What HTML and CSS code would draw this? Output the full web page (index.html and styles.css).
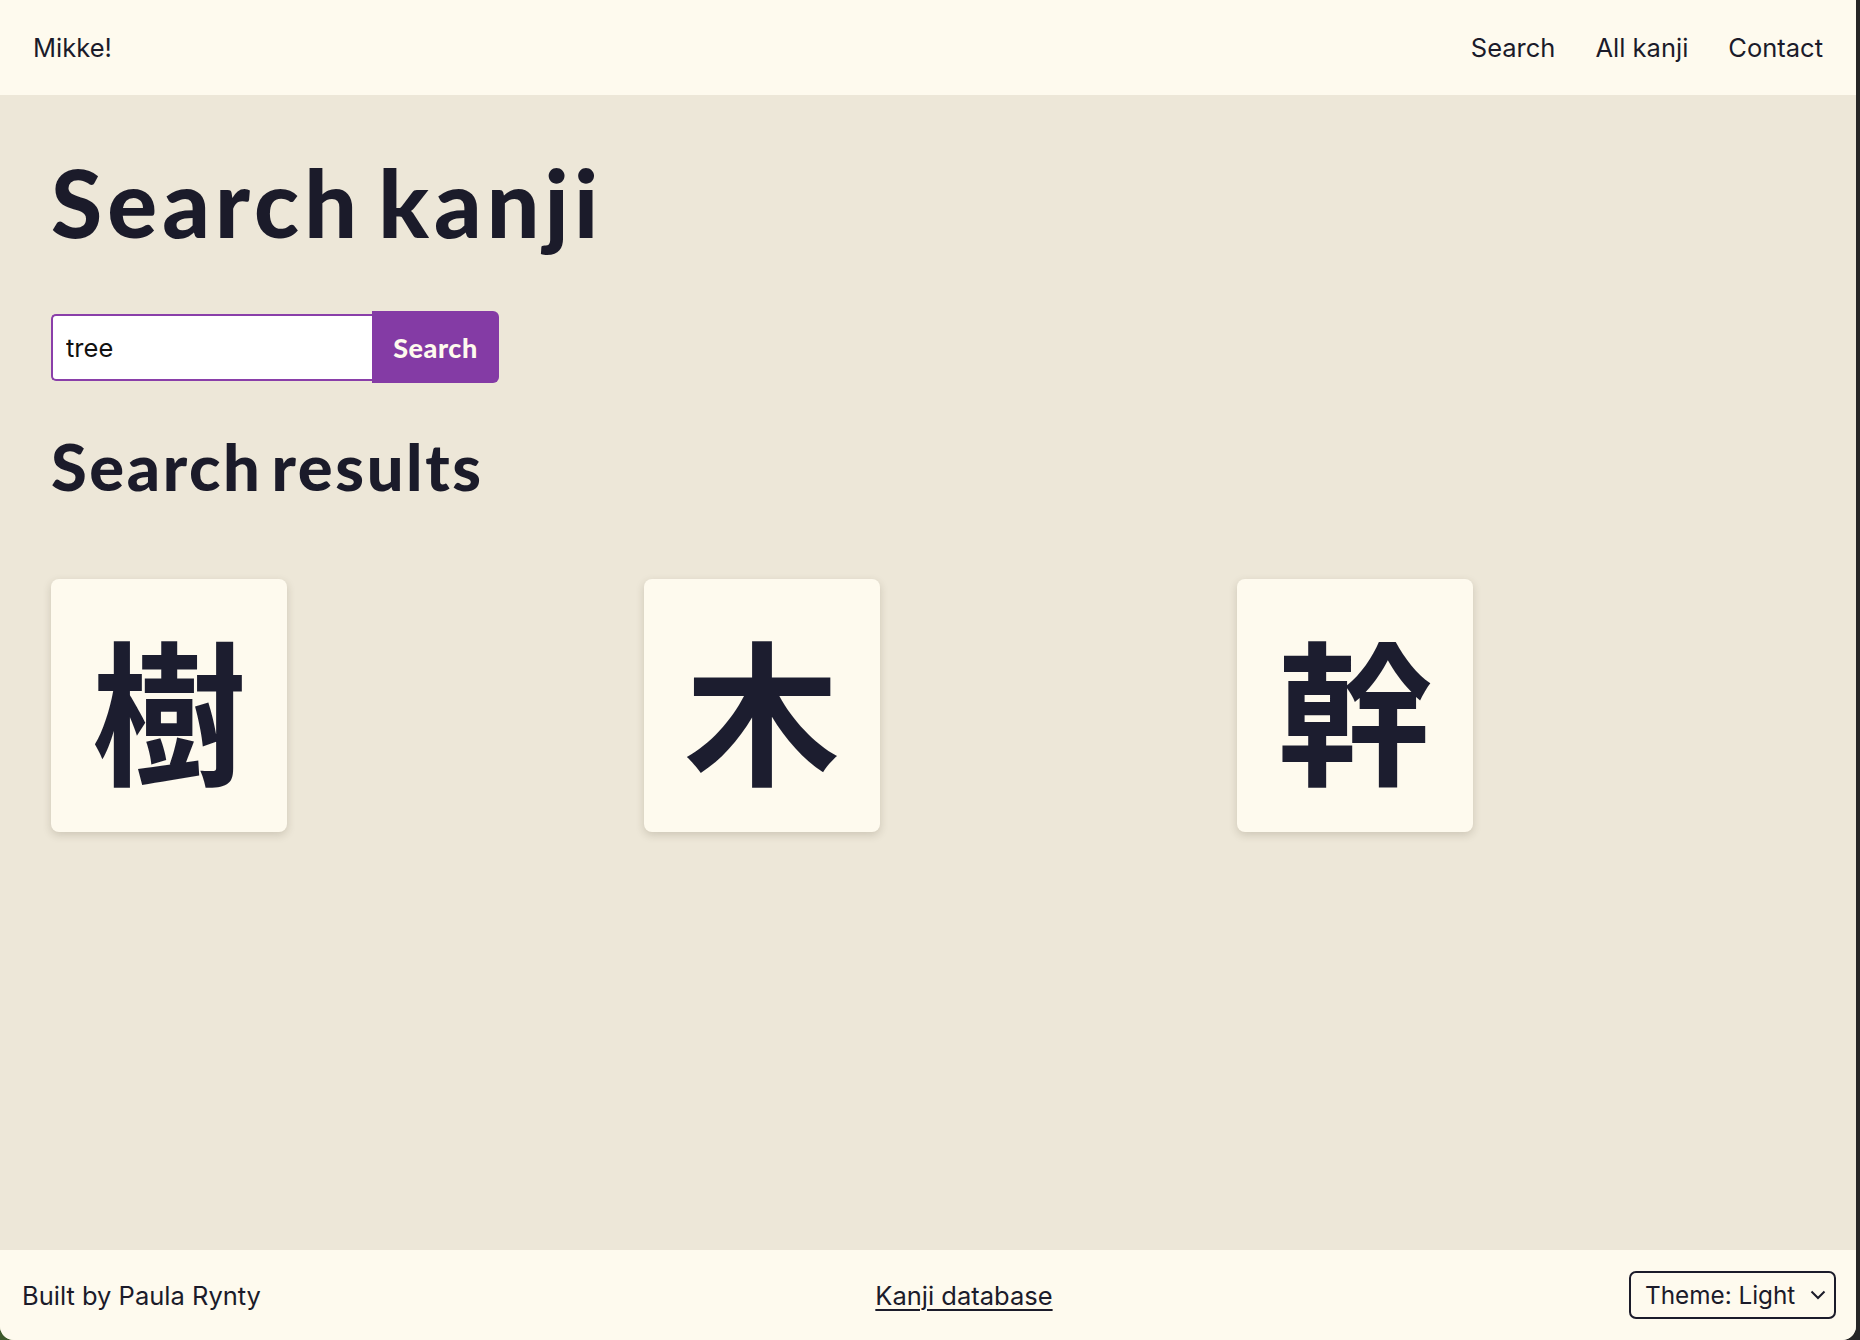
FILE: index.html
```html
<!DOCTYPE html>
<html lang="en">
<head>
<meta charset="utf-8">
<title>Mikke! – Search kanji</title>
<link rel="stylesheet" href="styles.css">
</head>
<body>
<div class="window">
  <header class="site-header">
    <a class="brand" href="#">Mikke!</a>
    <nav class="nav">
      <a href="#">Search</a>
      <a href="#">All kanji</a>
      <a href="#">Contact</a>
    </nav>
  </header>
  <main class="main">
    <h1 class="title">Search kanji</h1>
    <form class="search-form">
      <input class="search-input" type="text" value="tree">
      <button class="search-btn" type="button">Search</button>
    </form>
    <h2 class="subtitle">Search results</h2>
    <div class="results">
      <a class="kanji-card" href="#" lang="ja">樹</a>
      <a class="kanji-card" href="#" lang="ja">木</a>
      <a class="kanji-card" href="#" lang="ja">幹</a>
    </div>
  </main>
  <footer class="site-footer">
    <span class="credit">Built by Paula Rynty</span>
    <a class="db-link" href="#">Kanji database</a>
    <div class="theme-select">
      <select class="theme">
        <option>Theme: Light</option>
        <option>Theme: Dark</option>
      </select>
      <svg class="chev" width="16" height="10" viewBox="0 0 16 10"><path d="M1.5 1.5 L8 8 L14.5 1.5" fill="none" stroke="#1b1b2a" stroke-width="2"/></svg>
    </div>
  </footer>
</div>
</body>
</html>
```
FILE: styles.css
```css
html {
  background: linear-gradient(to right, #3d5a2c 0, #3d5a2c 50%, #262626 50%, #262626 100%);
}
body {
  margin: 0;
  font-family: "Inter", "Liberation Sans", sans-serif;
  font-size: 25.5px;
  color: #1b1b2a;
}
.window {
  width: 1856px;
  min-height: 1340px;
  display: flex;
  flex-direction: column;
  background: #ede7d8;
  border-bottom-left-radius: 14px;
  border-bottom-right-radius: 14px;
  overflow: hidden;
}
a { color: inherit; text-decoration: none; }

.site-header {
  height: 95px;
  background: #fefaee;
  display: flex;
  align-items: center;
  justify-content: space-between;
  padding: 0 33px;
}
.nav {
  display: flex;
  gap: 40px;
}

.main {
  flex: 1;
  padding: 61px 51px 40px;
}
.title {
  margin: 0;
  font-family: "Lato", sans-serif;
  font-weight: 900;
  font-size: 93px;
  line-height: 1;
  letter-spacing: 0.055em;
  word-spacing: -11px;
}
.search-form {
  margin-top: 62px;
  display: flex;
  align-items: center;
}
.search-input {
  box-sizing: border-box;
  width: 321px;
  height: 67px;
  border: 2px solid #8a3fa9;
  border-right: none;
  border-radius: 5px 0 0 5px;
  background: #ffffff;
  padding: 0 13px;
  font-family: "Inter", sans-serif;
  font-size: 25.5px;
  color: #111;
  outline: none;
}
.search-btn {
  box-sizing: border-box;
  width: 127px;
  height: 72px;
  border: none;
  border-radius: 0 6px 6px 0;
  background: #843ba5;
  color: #fefaee;
  font-family: "Lato", sans-serif;
  font-weight: 900;
  font-size: 27px;
  letter-spacing: 0.02em;
  padding: 0;
}
.subtitle {
  margin: 51px 0 0;
  font-family: "Lato", sans-serif;
  font-weight: 900;
  font-size: 65px;
  line-height: 1;
  letter-spacing: 0.04em;
  word-spacing: -9px;
}
.results {
  margin-top: 80px;
  display: grid;
  grid-template-columns: repeat(3, 1fr);
  gap: 25px;
}
.kanji-card {
  width: 236px;
  height: 253px;
  background: #fefaee;
  border-radius: 8px;
  box-shadow: 0 3px 8px rgba(60, 50, 30, 0.18);
  display: flex;
  align-items: center;
  justify-content: center;
  font-family: "Noto Sans CJK JP", sans-serif;
  font-weight: 700;
  font-size: 155px;
  line-height: 1;
  color: #1c1d2f;
  box-sizing: border-box;
}

.site-footer {
  height: 90px;
  background: #fefaee;
  display: flex;
  align-items: center;
  justify-content: space-between;
  padding: 0 20px 0 22px;
}
.db-link {
  text-decoration: underline;
  text-underline-offset: 4px;
  text-decoration-thickness: 2px;
  margin-left: 38px;
}
.theme-select {
  position: relative;
}
.theme {
  appearance: none;
  -webkit-appearance: none;
  box-sizing: border-box;
  width: 207px;
  height: 48px;
  border: 2px solid #1b1b2a;
  border-radius: 7px;
  background: #fefaee;
  color: #1b1b2a;
  font-family: "Inter", sans-serif;
  font-size: 24.3px;
  padding: 0 0 0 14px;
}
.chev {
  position: absolute;
  right: 10px;
  top: 19px;
  pointer-events: none;
}
```
